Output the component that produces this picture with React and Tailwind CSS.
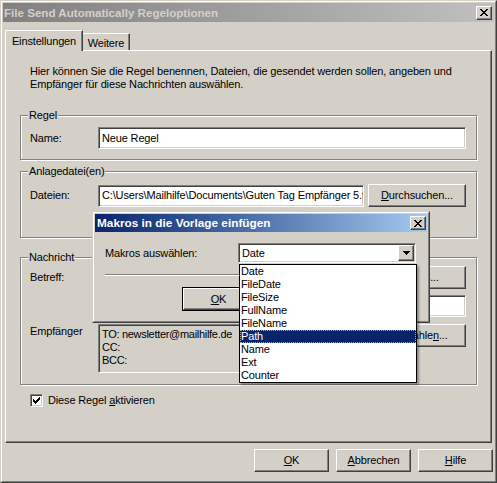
import React from "react";

const raised =
  "border border-t-white border-l-white border-r-[#404040] border-b-[#404040] shadow-[inset_-1px_-1px_0_#808080] bg-[#d4d0c8]";
const sunken =
  "border border-t-[#808080] border-l-[#808080] border-r-white border-b-white shadow-[inset_1px_1px_0_#404040,inset_-1px_-1px_0_#d4d0c8]";

const Button = ({ className = "", children }) => (
  <div className={`${raised} flex items-center justify-center leading-[13px] ${className}`}>
    {children}
  </div>
);

const Input = ({ className = "", children }) => (
  <div className={`${sunken} bg-white flex items-center px-[3px] overflow-hidden whitespace-nowrap leading-[13px] ${className}`}>
    {children}
  </div>
);

const Group = ({ label, className = "", children }) => (
  <div className={`relative ml-[14px] w-[457px] border border-[#808080] shadow-[inset_1px_1px_0_white,1px_1px_0_white] ${className}`}>
    <span className="absolute left-[7px] -top-[7px] bg-[#d4d0c8] px-[1px] leading-[13px]">{label}</span>
    {children}
  </div>
);

const CloseBox = ({ className = "" }) => (
  <div className={`${raised} w-[16px] h-[14px] flex items-center justify-center ${className}`}>
    <svg width="8" height="7" viewBox="0 0 8 7" shapeRendering="crispEdges">
      <path d="M0 0h2v1h-2zM6 0h2v1h-2zM1 1h2v1h-2zM5 1h2v1h-2zM2 2h4v1h-4zM3 3h2v1h-2zM2 4h4v1h-4zM1 5h2v1h-2zM5 5h2v1h-2zM0 6h2v1h-2zM6 6h2v1h-2z" fill="#000" />
    </svg>
  </div>
);

const macros = ["Date", "FileDate", "FileSize", "FullName", "FileName", "Path", "Name", "Ext", "Counter"];

export default function App() {
  return (
    <div className="relative w-[497px] h-[483px] overflow-hidden bg-[#d4d0c8] text-[11px] tracking-[-0.15px] text-black font-['Liberation_Sans',Arial,sans-serif] border border-t-[#d4d0c8] border-l-[#d4d0c8] border-r-[#404040] border-b-[#404040]">
      <div className="h-full border border-t-white border-l-white border-r-[#808080] border-b-[#808080] p-px flex flex-col">
        {/* title bar */}
        <div className="h-[19px] flex items-center justify-between pl-[1px] pr-[2px] bg-gradient-to-r from-[#808080] to-[#c0c0c0]">
          <span className="font-bold text-[11.6px] tracking-normal text-[#d4d0c8] leading-[13px]">File Send Automatically Regeloptionen</span>
          <CloseBox />
        </div>

        {/* tabs */}
        <div className="mt-[8px] ml-[2px] flex items-end h-[20px]">
          <div className="relative z-10 h-[21px] -mb-px w-[78px] bg-[#d4d0c8] border-t border-l border-r border-t-white border-l-white border-r-[#404040] rounded-tl-[2px] shadow-[inset_-1px_0_0_#808080] flex items-start justify-center pt-[4px] leading-[13px]">
            Einstellungen
          </div>
          <div className="h-[17px] w-[47px] border-t border-r border-t-white border-r-[#404040] shadow-[inset_-1px_0_0_#808080] flex items-start justify-center pt-[3px] leading-[13px]">
            Weitere
          </div>
        </div>

        {/* tab panel */}
        <div className="ml-[2px] w-[487px] h-[393px] border border-t-white border-l-white border-r-[#404040] border-b-[#404040] shadow-[inset_-1px_-1px_0_#808080] flex flex-col">
          <p className="mt-[14px] ml-[24px] leading-[13px]">
            Hier können Sie die Regel benennen, Dateien, die gesendet werden sollen, angeben und
            <br />
            Empfänger für diese Nachrichten auswählen.
          </p>

          <Group label="Regel" className="mt-[24px] h-[45px]">
            <div className="flex items-center pt-[11px] pl-[9px]">
              <span className="w-[68px]">Name:</span>
              <Input className="w-[368px] h-[22px]">Neue Regel</Input>
            </div>
          </Group>

          <Group label="Anlagedatei(en)" className="mt-[11px] h-[67px]">
            <div className="flex items-center pt-[12px] pl-[9px]">
              <span className="w-[68px]">Dateien:</span>
              <Input className="w-[266px] h-[22px]">
                C:\Users\Mailhilfe\Documents\Guten Tag Empfänger 5.txt
              </Input>
              <Button className="ml-[4px] w-[98px] h-[23px]">
                <span><span className="underline">D</span>urchsuchen...</span>
              </Button>
            </div>
          </Group>

          <Group label="Nachricht" className="mt-[19px] h-[128px]">
            <div className="flex flex-col pt-[8px] pl-[9px]">
              <div className="flex items-center">
                <span className="w-[68px]">Betreff:</span>
                <Input className="w-[266px] h-[22px]" />
                <Button className="ml-[4px] w-[98px] h-[23px]">
                  <span><span className="underline">M</span>akros...</span>
                </Button>
              </div>
              <div className="flex mt-[6px] ml-[68px]">
                <Input className="w-[368px] h-[22px]" />
              </div>
              <div className="flex items-start mt-[7px]">
                <span className="w-[68px] pt-[1px] leading-[13px]">Empfänger</span>
                <div className={`${sunken} bg-[#d4d0c8] w-[266px] h-[49px] px-[3px] pt-[3px] leading-[13px] tracking-[-0.3px]`}>
                  TO: newsletter@mailhilfe.de
                  <br />
                  CC:
                  <br />
                  BCC:
                </div>
                <Button className="ml-[4px] w-[98px] h-[23px]">
                  <span>Auswähle<span className="underline">n</span>...</span>
                </Button>
              </div>
            </div>
          </Group>

          <div className="mt-[9px] ml-[24px] flex items-center">
            <div className={`${sunken} bg-white w-[13px] h-[13px] flex items-center justify-center`}>
              <svg width="7" height="7" viewBox="0 0 7 7" shapeRendering="crispEdges">
                <path d="M6 0h1v1h-1zM5 1h2v1h-2zM0 2h1v1h-1zM4 2h3v1h-3zM0 3h2v1h-2zM3 3h3v1h-3zM0 4h5v1h-5zM1 5h3v1h-3zM2 6h1v1h-1z" fill="#000" />
              </svg>
            </div>
            <span className="ml-[5px] leading-[13px]">
              Diese Regel <span className="underline">a</span>ktivieren
            </span>
          </div>
        </div>

        {/* bottom buttons */}
        <div className="mt-[6px] flex justify-end gap-[7px] pr-[1px]">
          <Button className="w-[75px] h-[23px]">
            <span><span className="underline">O</span>K</span>
          </Button>
          <Button className="w-[75px] h-[23px]">
            <span><span className="underline">A</span>bbrechen</span>
          </Button>
          <Button className="w-[75px] h-[23px]">
            <span><span className="underline">H</span>ilfe</span>
          </Button>
        </div>
      </div>

      {/* macro dialog */}
      <div className="absolute left-[91px] top-[210px] w-[338px] h-[112px] border border-t-[#d4d0c8] border-l-[#d4d0c8] border-r-[#404040] border-b-[#404040] bg-[#d4d0c8]">
        <div className="h-full border border-t-white border-l-white border-r-[#808080] border-b-[#808080] p-px flex flex-col">
          <div className="h-[18px] flex items-center justify-between pl-[2px] pr-[1px] bg-gradient-to-r from-[#0a246a] to-[#a6caf0]">
            <span className="font-bold text-[11.8px] tracking-normal text-white leading-[13px]">Makros in die Vorlage einfügen</span>
            <CloseBox />
          </div>
          <div className="flex flex-col pl-[10px]">
            <div className="mt-[11px] flex items-center">
              <span className="w-[133px]">Makros auswählen:</span>
              <div className={`${sunken} bg-white w-[178px] h-[20px] flex items-center justify-between pl-[3px] pr-[1px]`}>
                <span className="leading-[13px]">Date</span>
                <div className={`${raised} w-[16px] h-[16px] flex items-center justify-center`}>
                  <svg width="7" height="4" viewBox="0 0 7 4" shapeRendering="crispEdges">
                    <path d="M0 0h7v1h-7zM1 1h5v1h-5zM2 2h3v1h-3zM3 3h1v1h-1z" fill="#000" />
                  </svg>
                </div>
              </div>
            </div>
            <div className="mt-[11px] w-[310px] h-[2px] border-t border-t-[#808080] border-b border-b-white" />
            <div className="mt-[11px] ml-[77px] w-[73px] h-[24px] border border-black">
              <Button className="w-full h-full">
                <span><span className="underline">O</span>K</span>
              </Button>
            </div>
          </div>
        </div>
      </div>

      {/* open dropdown list */}
      <div className="absolute left-[238px] top-[263px] w-[178px] border border-black bg-white shadow-[2px_2px_2px_rgba(0,0,0,0.35)]">
        {macros.map((m) => (
          <div
            key={m}
            className={
              m === "Path"
                ? "h-[13px] leading-[13px] pl-[1px] bg-[#0a246a] text-white outline outline-1 outline-dotted outline-[#a6a6a6] -outline-offset-1"
                : "h-[13px] leading-[13px] pl-[1px]"
            }
          >
            {m}
          </div>
        ))}
      </div>
    </div>
  );
}
